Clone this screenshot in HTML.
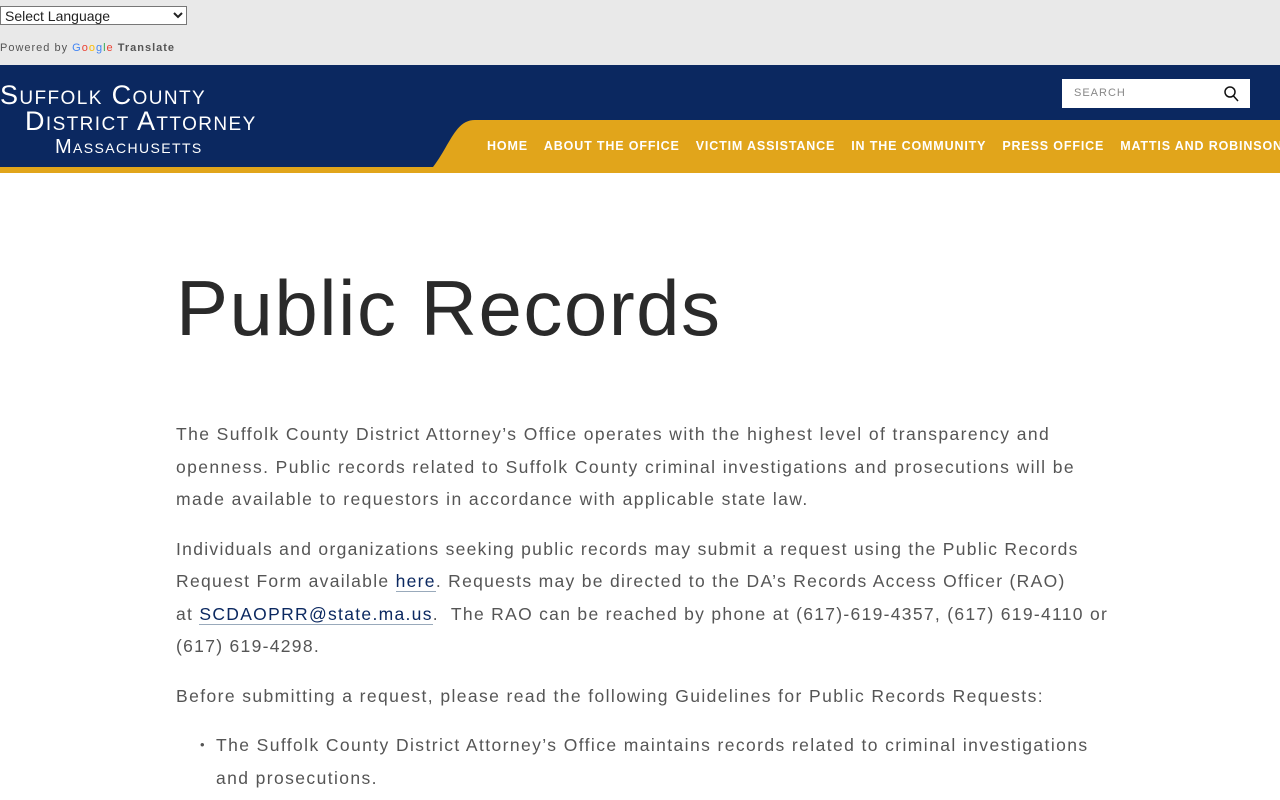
<!DOCTYPE html>
<html><head><meta charset="utf-8"><style>
*{margin:0;padding:0;box-sizing:border-box}
body{width:1280px;height:800px;overflow:hidden;background:#fff;font-family:"Liberation Sans",sans-serif}
.top{height:65px;background:#e9e9e9;position:relative}
select{position:absolute;left:0;top:6px;width:187px;height:19px;font-size:14px;font-family:"Liberation Sans",sans-serif;border:1px solid #777;background:#fff;color:#222}
.pw{position:absolute;left:0;top:42px;font-size:11px;color:#555;letter-spacing:1px}
.pw b{color:#555}
.hdr{position:relative;height:108px;background:#0b2860}
.logo{position:absolute;color:#fff;font-variant:small-caps;letter-spacing:1.4px;line-height:1}
.srch{position:absolute;left:1062px;top:14px;width:188px;height:29px;background:#fff;font-size:11px;color:#888;padding:8px 12px;letter-spacing:1px}
.nav{position:absolute;top:74px;left:487px;color:#fff;font-size:12.5px;font-weight:bold;letter-spacing:.85px;white-space:nowrap}
.nav span{margin-right:16px}
.main{padding-left:176px;color:#555;font-size:17.5px;letter-spacing:1.4px;line-height:32.5px}
h1{font-weight:normal;font-size:78px;color:#2a2a2a;letter-spacing:1.5px;margin:90px 0 65px;line-height:90px}
p{margin-bottom:17px;width:918px}
p.w{width:990px;letter-spacing:1.3px}
a{color:#0b2860;text-decoration:none;border-bottom:1px solid #9ab}
ul{margin-left:40px;width:900px;list-style:none}
li:before{content:"•";position:absolute;margin-left:-16px;font-size:13px}
</style></head><body>
<div class="top"><select><option>Select Language</option></select>
<div class="pw">Powered by <span style="color:#4285f4">G</span><span style="color:#ea4335">o</span><span style="color:#fbbc05">o</span><span style="color:#4285f4">g</span><span style="color:#34a853">l</span><span style="color:#ea4335">e</span> <b>Translate</b></div></div>
<div class="hdr">
<svg style="position:absolute;left:0;top:0" width="1280" height="108"><path d="M433 102 C450 80,455 55,475 55 L1280 55 L1280 108 L0 108 L0 102 Z" fill="#e1a51b"/></svg>
<div class="logo" style="left:0;top:17px;font-size:27px">Suffolk County</div>
<div class="logo" style="left:25px;top:43px;font-size:27px">District Attorney</div>
<div class="logo" style="left:55px;top:72px;font-size:20px">Massachusetts</div>
<div class="srch">SEARCH<svg style="position:absolute;right:11px;top:7px" width="15" height="16"><circle cx="6" cy="6" r="5" fill="none" stroke="#111" stroke-width="1.5"/><path d="M9.5 10 L14 15" stroke="#111" stroke-width="1.5"/></svg></div>
<div class="nav"><span>HOME</span><span>ABOUT THE OFFICE</span><span>VICTIM ASSISTANCE</span><span>IN THE COMMUNITY</span><span>PRESS OFFICE</span><span>MATTIS AND ROBINSON</span></div>
</div>
<div class="main">
<h1>Public Records</h1>
<p>The Suffolk County District Attorney’s Office operates with the highest level of transparency and openness. Public records related to Suffolk County criminal investigations and prosecutions will be made available to requestors in accordance with applicable state law.</p>
<p class="w">Individuals and organizations seeking public records may submit a request using the Public Records<br>Request Form available <a>here</a>. Requests may be directed to the DA’s Records Access Officer (RAO)<br>at <a>SCDAOPRR@state.ma.us</a>.&nbsp; The RAO can be reached by phone at (617)-619-4357, (617) 619-4110 or<br>(617) 619-4298.</p>
<p>Before submitting a request, please read the following Guidelines for Public Records Requests:</p>
<ul><li>The Suffolk County District Attorney’s Office maintains records related to criminal investigations and prosecutions.</li></ul>
</div>
</body></html>
